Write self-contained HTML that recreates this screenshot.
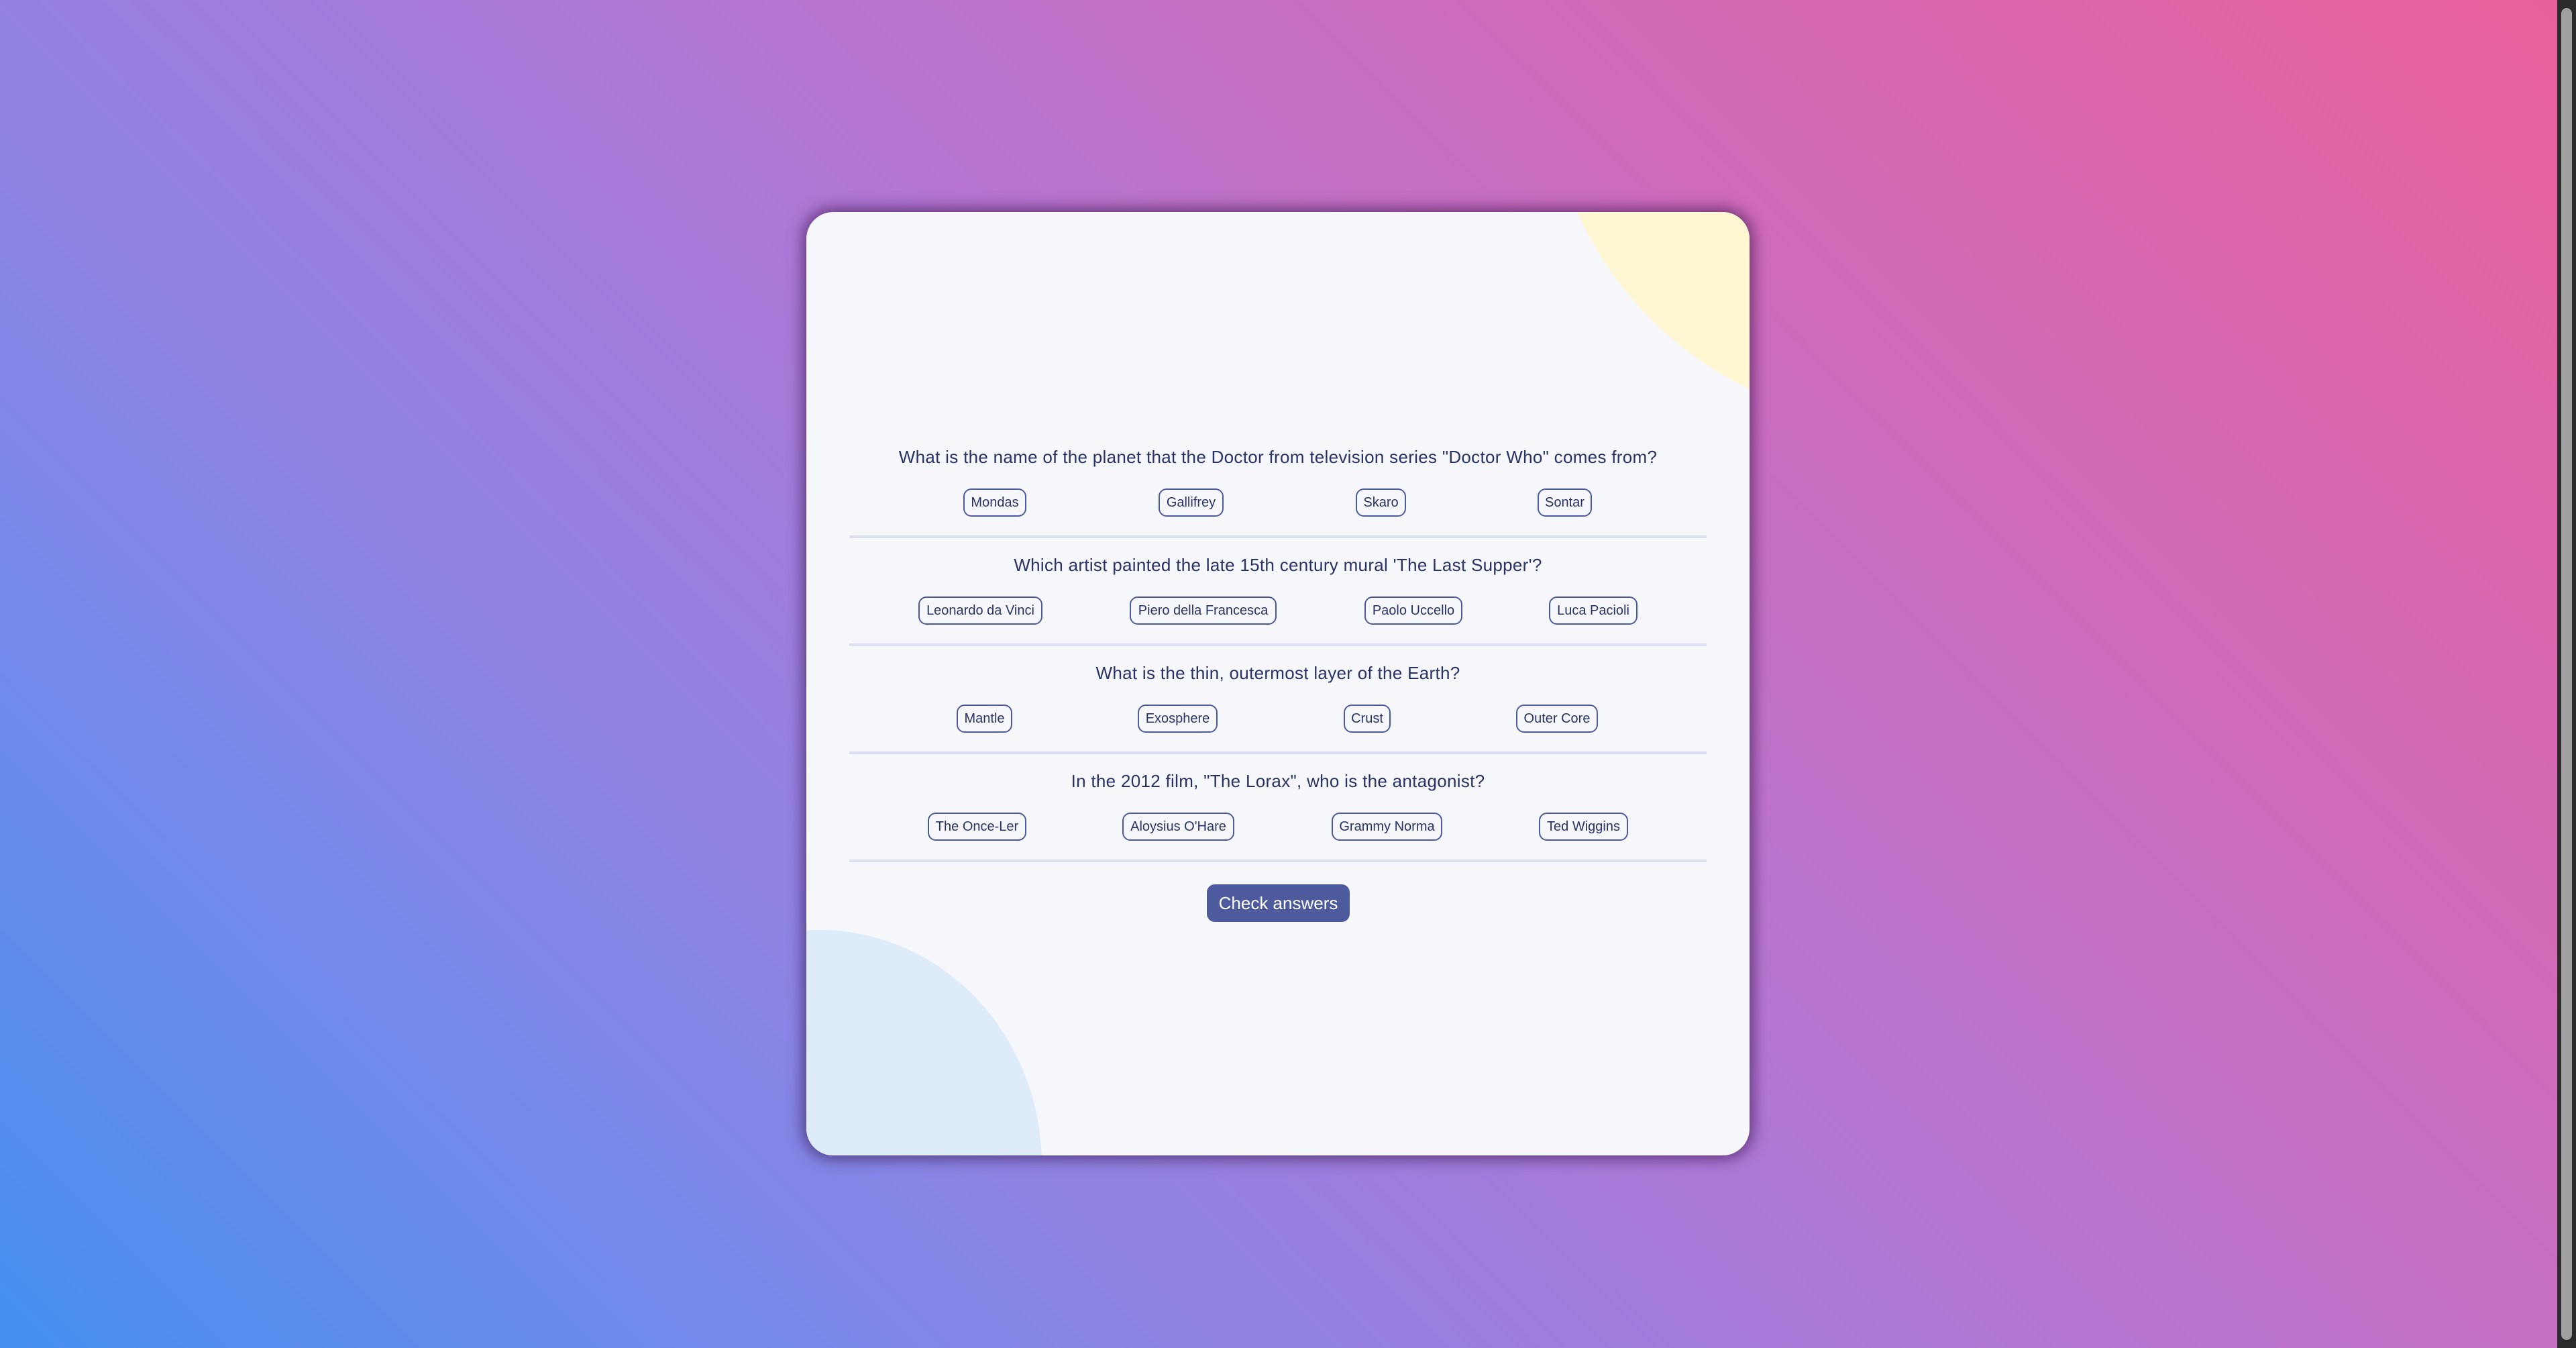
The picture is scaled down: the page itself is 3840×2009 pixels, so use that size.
<!DOCTYPE html>
<html><head><meta charset="utf-8"><style>
html,body{margin:0;padding:0;width:3840px;height:2009px;overflow:hidden;}
body{position:relative;background:linear-gradient(45deg,#4590f0 0%,#8a85e6 28%,#b078d6 50%,#cf6cbc 72%,#e9609a 100%);font-family:"Liberation Sans",sans-serif;}
.sb{position:absolute;left:3812px;top:0;width:28px;height:2009px;background:#2b2b2b;}
.th{position:absolute;left:3818px;top:12px;width:16px;height:1985px;background:#a0a0a0;border-radius:8px;}
.card{position:absolute;left:1202px;top:316px;width:1406px;height:1406px;background:#f5f7fb;border-radius:40px;overflow:hidden;box-shadow:0 0 22px 6px rgba(40,10,60,0.55);}
.y{position:absolute;left:1103px;top:-750px;width:1066px;height:1066px;border-radius:50%;background:#fef7d2;}
.b{position:absolute;left:-311px;top:1070px;width:662px;height:700px;border-radius:50%;background:#deebf8;}
.q{position:absolute;left:0;width:1406px;text-align:center;color:#293264;font-size:26px;letter-spacing:0.3px;line-height:30px;}
.o{position:absolute;height:42px;box-sizing:border-box;border:2px solid #4d5b9e;border-radius:12px;color:#293264;font-size:20px;line-height:38px;text-align:center;white-space:nowrap;}
.d{position:absolute;left:64px;width:1278px;height:4px;background:#dbdef0;}
.btn{position:absolute;left:597px;top:1002px;width:213px;height:56px;background:#4d5b9e;border-radius:12px;color:#fff;font-size:26px;line-height:56px;text-align:center;}
</style></head><body>
<div class="card">
<div class="y"></div><div class="b"></div>
<div class="q" style="top:350px">What is the name of the planet that the Doctor from television series "Doctor Who" comes from?</div>
<div class="o" style="left:234px;top:412px;width:94px">Mondas</div>
<div class="o" style="left:525px;top:412px;width:97px">Gallifrey</div>
<div class="o" style="left:819px;top:412px;width:75px">Skaro</div>
<div class="o" style="left:1090px;top:412px;width:81px">Sontar</div>
<div class="d" style="top:482px"></div>
<div class="q" style="top:511px">Which artist painted the late 15th century mural 'The Last Supper'?</div>
<div class="o" style="left:167px;top:573px;width:185px">Leonardo da Vinci</div>
<div class="o" style="left:482px;top:573px;width:219px">Piero della Francesca</div>
<div class="o" style="left:832px;top:573px;width:146px">Paolo Uccello</div>
<div class="o" style="left:1107px;top:573px;width:132px">Luca Pacioli</div>
<div class="d" style="top:643px"></div>
<div class="q" style="top:672px">What is the thin, outermost layer of the Earth?</div>
<div class="o" style="left:224px;top:734px;width:83px">Mantle</div>
<div class="o" style="left:494px;top:734px;width:119px">Exosphere</div>
<div class="o" style="left:801px;top:734px;width:70px">Crust</div>
<div class="o" style="left:1058px;top:734px;width:122px">Outer Core</div>
<div class="d" style="top:804px"></div>
<div class="q" style="top:833px">In the 2012 film, "The Lorax", who is the antagonist?</div>
<div class="o" style="left:181px;top:895px;width:147px">The Once-Ler</div>
<div class="o" style="left:471px;top:895px;width:167px">Aloysius O'Hare</div>
<div class="o" style="left:783px;top:895px;width:165px">Grammy Norma</div>
<div class="o" style="left:1092px;top:895px;width:133px">Ted Wiggins</div>
<div class="d" style="top:965px"></div>
<div class="btn">Check answers</div>
</div>
<div class="sb"></div><div class="th"></div>
</body></html>
